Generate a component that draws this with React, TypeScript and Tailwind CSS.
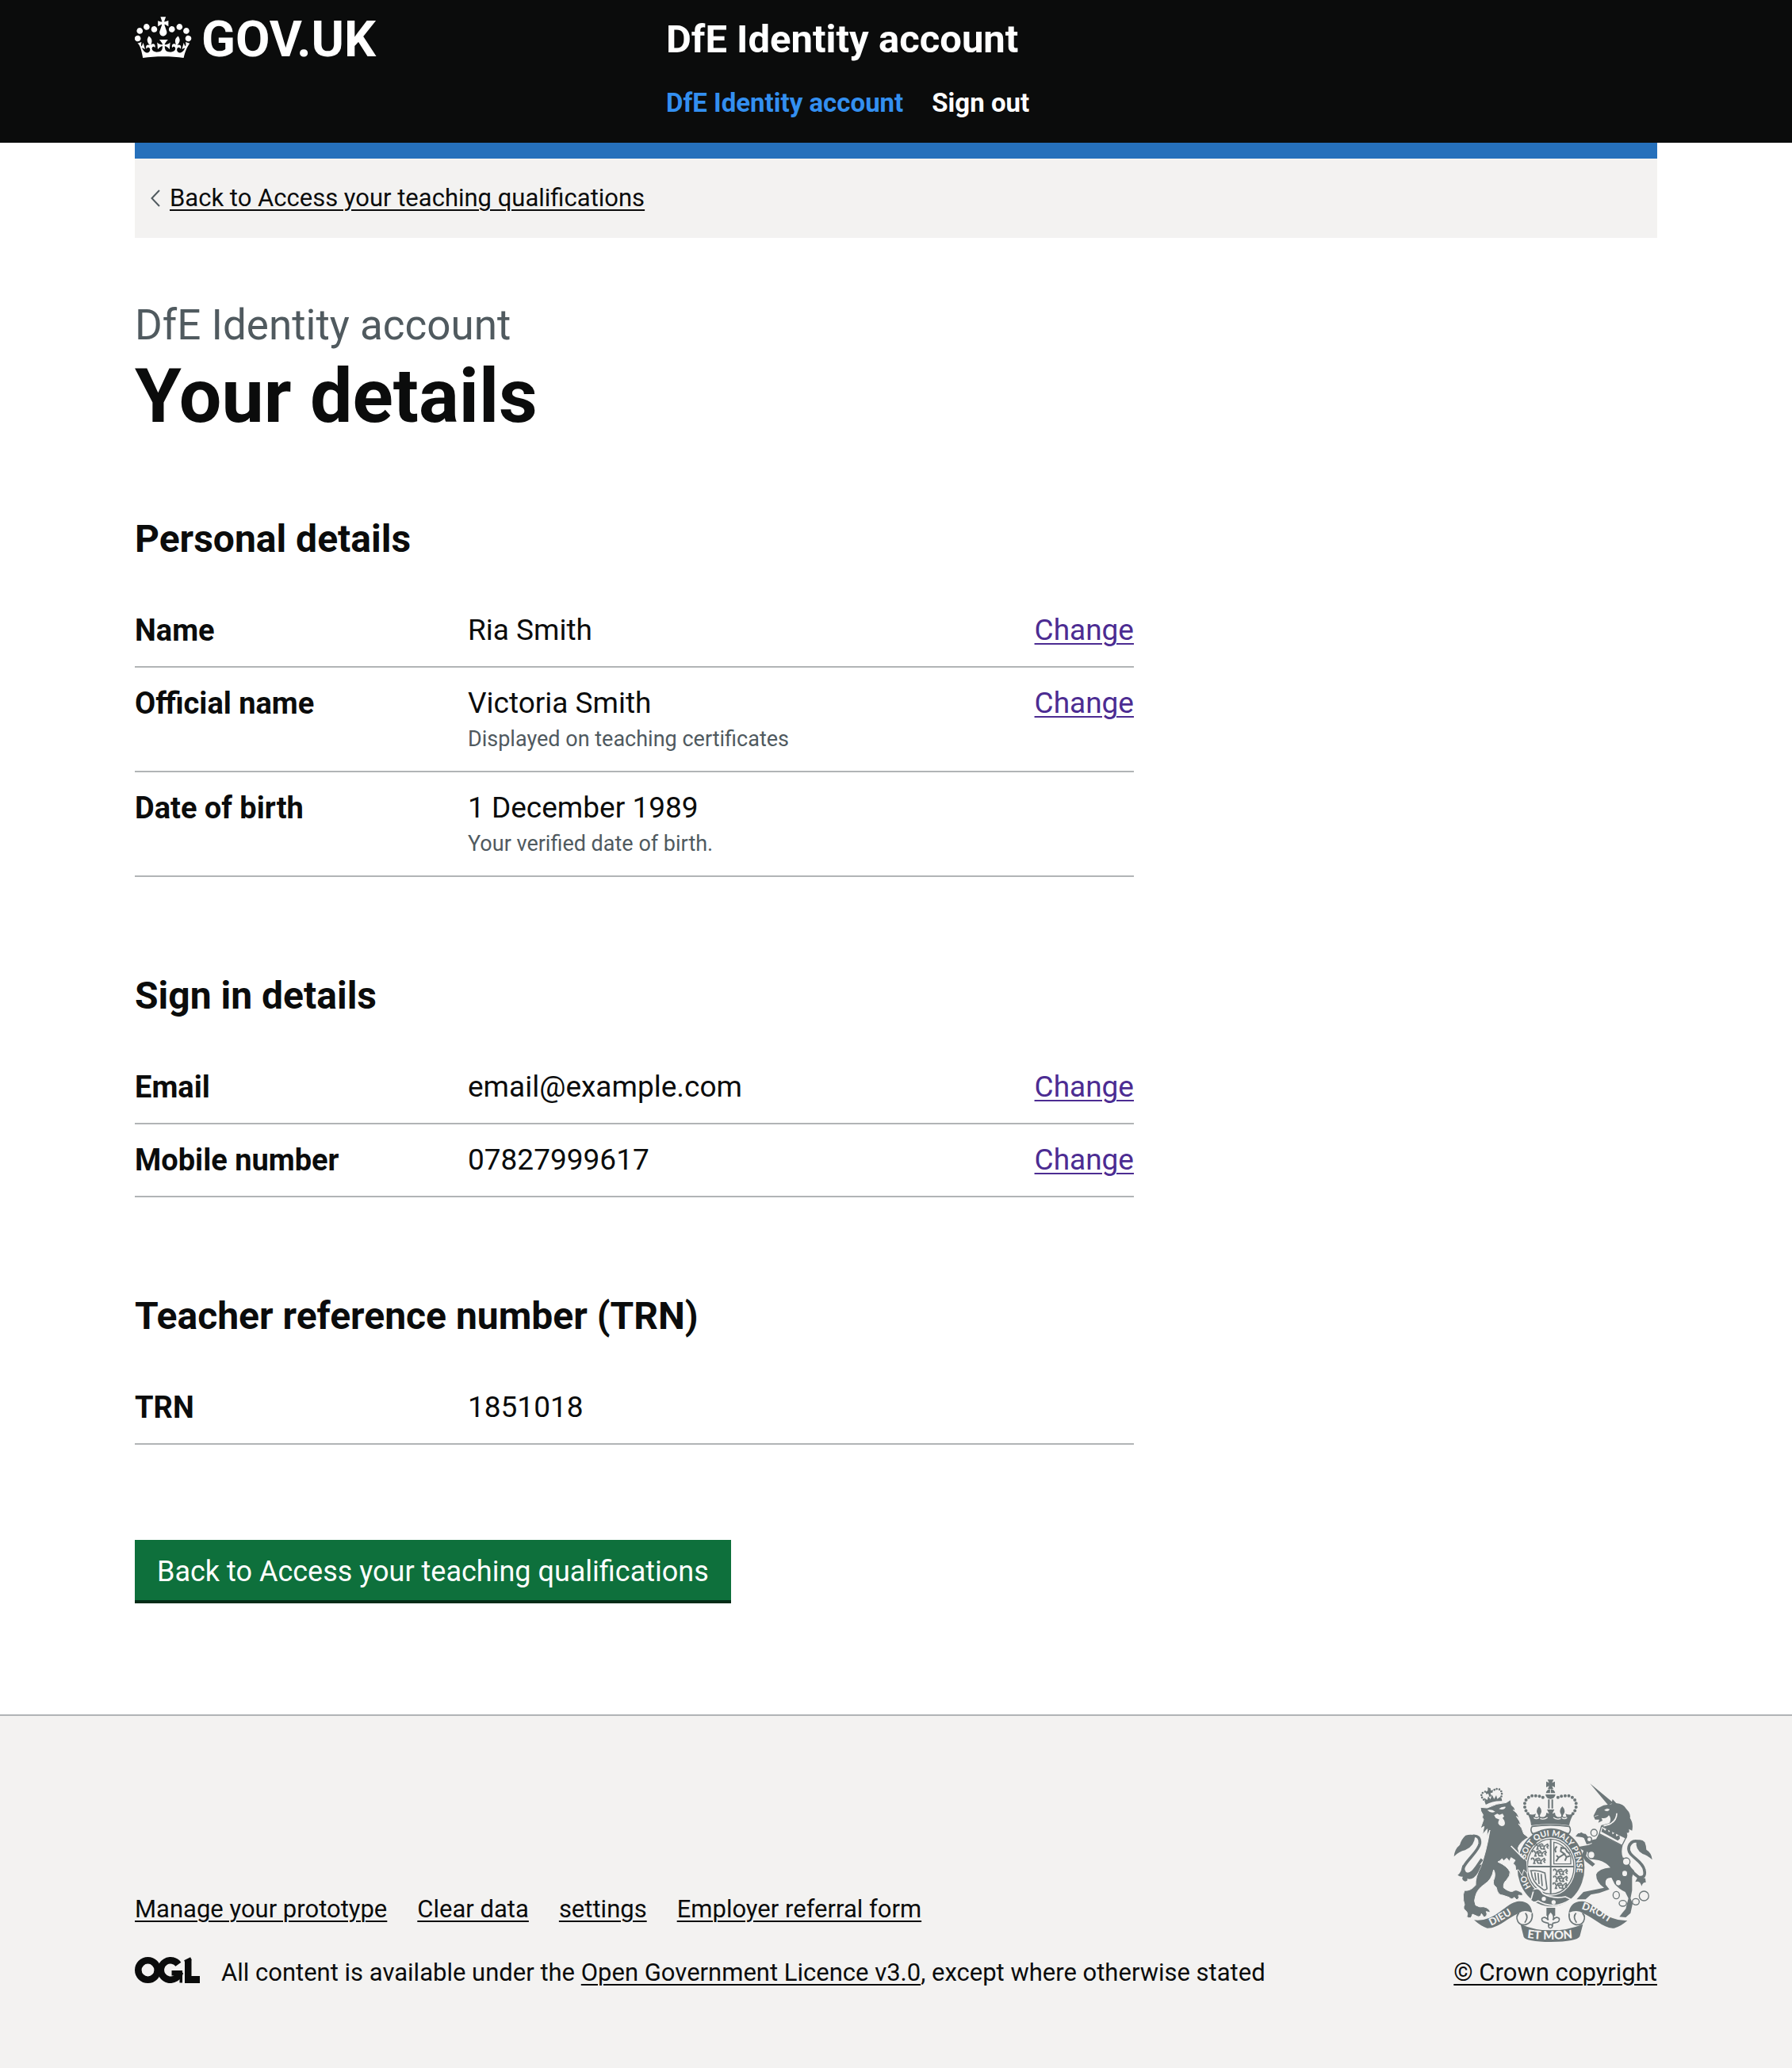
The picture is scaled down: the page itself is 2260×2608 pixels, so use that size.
import React from "react";

type Row = { label: string; value: string; hint?: string; change?: boolean };

const sections: { title: string; rows: Row[] }[] = [
  {
    title: "Personal details",
    rows: [
      { label: "Name", value: "Ria Smith", change: true },
      { label: "Official name", value: "Victoria Smith", hint: "Displayed on teaching certificates", change: true },
      { label: "Date of birth", value: "1 December 1989", hint: "Your verified date of birth." },
    ],
  },
  {
    title: "Sign in details",
    rows: [
      { label: "Email", value: "email@example.com", change: true },
      { label: "Mobile number", value: "07827999617", change: true },
    ],
  },
  {
    title: "Teacher reference number (TRN)",
    rows: [{ label: "TRN", value: "1851018" }],
  },
];

const footerLinks = ["Manage your prototype", "Clear data", "settings", "Employer referral form"];

function Crown() {
  return (
    <svg viewBox="0 0 36 32" className="h-16 w-[72px] shrink-0" fill="currentColor" aria-hidden="true">
      <path d="M6.7 12.2c1 .4 2.1-.1 2.5-1s-.1-2.1-1-2.5c-1-.4-2.1.1-2.5 1-.4 1 0 2.1 1 2.5m-4.3 2.5c1 .4 2.1-.1 2.5-1 .4-1-.1-2.1-1-2.5-1-.4-2.1.1-2.5 1-.5 1 0 2.1 1 2.5m-1.3 4.8c1 .4 2.1-.1 2.5-1 .4-1-.1-2.1-1-2.5-1-.4-2.1.1-2.5 1-.4 1 0 2.1 1 2.5m10.4-5.8c1 .4 2.1-.1 2.5-1 .4-1-.1-2.1-1-2.5-1-.4-2.1.1-2.5 1s0 2.1 1 2.5m17.4-1.5c-1 .4-2.1-.1-2.5-1s.1-2.1 1-2.5c1-.4 2.1.1 2.5 1 .5 1 0 2.1-1 2.5m4.3 2.5c-1 .4-2.1-.1-2.5-1-.4-1 .1-2.1 1-2.5 1-.4 2.1.1 2.5 1 .5 1 0 2.1-1 2.5m1.3 4.8c-1 .4-2.1-.1-2.5-1-.4-1 .1-2.1 1-2.5 1-.4 2.1.1 2.5 1 .4 1 0 2.1-1 2.5m-10.4-5.8c-1 .4-2.1-.1-2.5-1s.1-2.1 1-2.5c1-.4 2.1.1 2.5 1 .5 1 0 2.1-1 2.5m-5.3-4.9 2.4 1.3V6.5l-2.4.8c-.1-.1-.1-.2-.2-.2s1-3 1-3h-3.4l1 3c-.1.1-.2.1-.2.2-.1.1-2.4-.7-2.4-.7v3.5L17 8.8c-.1.1 0 .2.1.3l-1.4 4.2c-.1.2-.1.4-.1.7 0 1.1.8 2.1 1.9 2.2h.8c1.1-.2 1.9-1.1 1.9-2.2 0-.2 0-.4-.1-.7l-1.4-4.2c.2-.1.3-.2.3-.3m-1 20.3c4.6 0 8.9.3 12.8.9 1.1-4.6 2.4-7.2 3.8-9.1l-2.6-.9c.3 1.3.3 1.9 0 2.8-.4-.4-.8-1.2-1.1-2.4l-1.2 4.2c.8-.5 1.4-.9 2-.9-1.2 2.6-2.7 3.2-3.6 3-1.2-.2-1.7-1.3-1.5-2.2.3-1.3 1.6-1.6 2.2-.1 1.2-2.4-.8-3.1-2.1-2.4 1.9-1.9 2.2-3.6.6-5.7-2.2 1.7-2.2 3.3-1.2 5.6-1.3-1.5-3.3-.7-2.5 1.7.9-1.4 2.1-.5 2 .8-.2 1.2-1.7 2.1-3.7 1.9-2.8-.2-3-2.2-3-3.7.7-.1 1.9.5 3 2l.4-4.4c-1.1 1.2-2.3 1.4-3.5 1.4.4-1.2 2.1-3.1 2.1-3.1h-5.4s1.7 1.9 2.1 3.1c-1.2 0-2.4-.2-3.5-1.4l.4 4.4c1.1-1.5 2.3-2.1 3-2-.1 1.6-.2 3.5-3 3.7-2 .2-3.5-.7-3.7-1.9-.1-1.3 1-2.2 1.9-.8.7-2.4-1.3-3.1-2.6-1.7 1-2.3 1-4-1.2-5.6-1.6 2.1-1.3 3.8.6 5.7-1.3-.7-3.2 0-2.1 2.4.6-1.5 1.9-1.1 2.2.1.2.9-.4 1.9-1.5 2.2-1 .2-2.4-.5-3.6-3 .6 0 1.2.3 2 .9l-1.2-4.2c-.3 1.1-.7 1.9-1.1 2.4-.3-.9-.2-1.4 0-2.8l-2.6.9C2.7 21 4 23.6 5.1 30c4-.6 8.2-.9 12.9-.9" />
    </svg>
  );
}

function OglLogo() {
  return (
    <svg viewBox="0 0 82 33" className="h-[33px] w-[82px] shrink-0 self-start text-[#0b0c0c]" role="img" aria-label="Open Government Licence">
      <g fill="none" stroke="currentColor" strokeWidth="8.6">
        <circle cx="16.5" cy="16.5" r="12.2" />
        <circle cx="45" cy="16.5" r="12.2" strokeDasharray="66 100" transform="rotate(12 45 16.5)" />
      </g>
      <rect x="46.5" y="17" width="13.5" height="6.5" fill="currentColor" />
      <rect x="56.5" y="17" width="3.5" height="15.5" fill="currentColor" />
      <rect x="63" y="4" width="8.5" height="29" fill="currentColor" />
      <line x1="63" y1="6" x2="71" y2="2" stroke="currentColor" strokeWidth="4" />
      <rect x="63" y="24" width="19" height="9" fill="currentColor" />
    </svg>
  );
}

function SmallLion({ x, y }: { x: number; y: number }) {
  return (
    <g transform={`translate(${x} ${y})`}>
      <path d="M0 8q-3-7 4-6q6 1 4 8M8 10h32M12 12l-4 10h7M20 12l4 9h6M36 12l-3 10h7M40 8l8-5 3 6-7 6M46 14l5 6M14 6l12-4 6 4" />
    </g>
  );
}

function RoyalArms() {
  const paper = "#f3f2f1";
  return (
    <svg viewBox="100 70 756 615" className="h-[205px] w-[252px]" fill="#6c7678" stroke="none" aria-hidden="true">
      <defs>
        <path id="garter" d="M468 518A98 117 0 0 1 468 284A98 117 0 0 1 468 518" />
        <path id="ribbon-left" d="M243 624Q290 602 352 561" />
        <path id="ribbon-mid" d="M379 670Q467 681 558 670" />
        <path id="ribbon-right" d="M584 560Q640 576 700 620" />
      </defs>

      {/* great crown */}
      <path d="M456 71h23l-6 12 11-5v22l-11-5 5 12h-21l5-12-11 5V78l11 5z" />
      <path d="M450 122q2-14 17-15q16 1 18 15zM448 127h38q-3 17-19 17t-19-17z" />
      <path d="M467 107v16" stroke={paper} strokeWidth="3" />
      <g fill="none" stroke="#6c7678" strokeWidth="12" strokeLinecap="round" strokeDasharray="0 14">
        <path d="M382 200C356 168 372 128 412 132Q434 132 450 146" />
        <path d="M552 200C578 168 562 128 522 132Q500 132 484 146" />
      </g>
      <path d="M458 146h6v34h-6zM471 146h6v34h-6z" />
      <path d="M376 192q14 18 36 8l-4 12q22 4 10-12q-8-14 6-28q14 14 6 28q-10 16 14 12l6-6 2-10 10 4-8-16h28l-8 16 10-4 2 10 6 6q22 4 14-12q-8-14 6-28q14 14 6 28q-12 16 10 12l-4-12q22 10 36-8q-18 26-22 52Q467 234 394 244q-2-26-18-52z" />
      <path d="M404 215q10 8 20 0M428 218q14 6 28-4M478 214q14 10 28 4M510 215q10 8 20 0" fill="none" stroke={paper} strokeWidth="4" />
      <path d="M398 248q-10 14 2 28Q467 248 536 276q12-14 2-28Q467 238 398 248z" fill={paper} stroke="#6c7678" strokeWidth="5" />

      {/* garter and shield */}
      <ellipse cx="469" cy="403" rx="127" ry="148" />
      <ellipse cx="468" cy="400" rx="94" ry="110" fill={paper} />
      <ellipse cx="468" cy="400" rx="88" ry="104" fill="none" stroke="#6c7678" strokeWidth="4" />
      <path d="M465 296h6v208h-6zM380 397h176v6H380z" />
      <g fill="none" stroke="#6c7678" strokeWidth="5">
        <SmallLion x={408} y={312} />
        <SmallLion x={400} y={338} />
        <SmallLion x={396} y={366} />
        <SmallLion x={480} y={408} />
        <SmallLion x={480} y={434} />
        <SmallLion x={478} y={460} />
        <path d="M480 308q36 4 64 54v28h-64z" strokeWidth="4" />
        <path d="M488 380l10-14-8-8M498 366l22-14-14-10 2-14 16 4 6 12 10 6M520 352l8 12-6 14M526 364l14-4M488 346q-8-14 4-22" strokeWidth="6" />
        <path d="M390 416q30-4 56 8l8 60q-10 10-18 0Q398 462 394 418M408 422l4 30M420 424l4 42M432 428l4 46" strokeWidth="5" />
      </g>
      <path d="M404 488q20-14 34 14Q476 524 524 514l20 10Q480 566 420 530q-20 12-26-6z" stroke={paper} strokeWidth="5" />
      <circle cx="442" cy="522" r="8" fill={paper} />
      <circle cx="479" cy="535" r="8" fill={paper} />
      <path d="M400 492q24-6 24 8q-10 8-4 22q-12 12-24 2" fill="none" stroke="#6c7678" strokeWidth="6" />
      <path d="M452 556h33v30h-33z" />
      <path d="M468 570q18 18 8 32q14-16 24-6q4 14-14 16l-10 2-2 12h-13l-2-12-10-2q-18-4-14-16q10-10 24 6q-8-16 9-32z" fill={paper} stroke="#6c7678" strokeWidth="5" />
      <circle cx="467" cy="626" r="7" fill={paper} stroke="#6c7678" strokeWidth="4" />

      {/* lion */}
      <g stroke={paper} strokeWidth="3">
        <path d="M204 190L202 176L228 178Q262 160 300 158L316 147L320 168Q334 176 334 190L326 186Q344 198 349 216L338 210Q352 228 356 244L346 238Q360 252 366 276L384 290Q352 306 344 330L350 350Q366 360 378 382L380 426L366 412L360 434L346 412L336 414L334 396L326 388L334 376L318 366L312 380L302 368L290 378L284 370Q276 380 268 382Q304 398 314 420Q316 434 300 452Q288 462 290 480Q310 496 324 494Q336 484 350 494Q366 500 360 510L346 508Q352 520 340 526L330 516Q322 528 310 516L286 508Q272 508 266 492L262 478Q248 470 252 452Q262 430 252 412Q246 450 216 468Q190 486 184 510Q176 530 184 546Q200 556 214 552Q236 556 240 574L224 570Q232 586 216 592L206 578Q202 596 186 586L172 580Q168 602 150 590Q158 578 146 566Q134 560 142 544L138 528Q134 504 142 490Q164 494 184 470Q182 440 204 400Q214 370 222 340Q232 300 238 262L226 286L228 258L210 278L216 248L202 256L214 222Q206 214 212 204z" />
      </g>
      <path d="M318 322L368 372" stroke={paper} strokeWidth="5" />
      <path d="M228 186q16-4 30 6q-16 8-30-6zM272 182q10-10 26-8q-6 14-26 8zM254 206l12-6 8 4 12-4 6 10-6 6q14 16 6 28q-14 8-22-6q-2-10 4-16l-14-6z" fill={paper} />
      <g>
        <path d="M222 166Q250 150 284 152L282 142Q250 146 222 158z" />
        <path d="M220 154l-4-14 12 8 4-14 8 12 6-18 8 16 8-14 4 14 14-10-4 16q-28 0-56 12z" />
        <path d="M230 100l10 4 2 8 8-2-2 10-8 2 4 12-8 2-4-12-8 2-2-9 8-3z" />
        <path d="M222 154Q196 132 212 120Q224 112 238 122M278 144Q290 118 274 108Q260 102 248 116" fill="none" stroke="#6c7678" strokeWidth="8" strokeLinecap="round" strokeDasharray="0 10" />
      </g>
      <path d="M208 372C190 396 170 440 144 426C112 400 196 350 200 312Q202 282 174 284" fill="none" stroke="#6c7678" strokeWidth="11" />
      <path d="M184 282Q164 276 146 282Q130 296 124 318Q104 334 102 362Q122 342 144 338Q180 324 182 284z" />
      <path d="M134 394Q130 424 116 432Q126 440 136 438Q128 448 144 456Q156 456 152 446Q176 452 192 424L208 392L190 396Q168 432 148 422z" />

      {/* unicorn */}
      <path d="M617 86L704 158L686 168z" />
      <path d="M630 208L644 180L668 168L698 164L702 145L716 160Q744 162 754 182Q772 200 768 216Q782 236 776 264L764 258Q768 276 756 272Q762 290 750 296L658 244L690 236Q700 216 688 206Q680 220 660 216L664 226L648 234L652 222L636 222z" />
      <path d="M672 186q10-8 18-2q-6 10-18 2zM634 210l14-4" fill={paper} stroke={paper} strokeWidth="2" />
      <path d="M718 198Q718 226 690 240L668 246" fill="none" stroke={paper} strokeWidth="5" />
      <path d="M660 247L752 292L738 320L652 276z" fill={paper} stroke="#6c7678" strokeWidth="4" />
      <path d="M660 268l4-14 10 10 8-10 6 16 10-10 4 18 12-8 2 16 12-6 2 14-8 8z" />
      <path d="M650 276L740 322Q730 356 752 384L784 416L776 440L776 490L770 520L778 540L770 576L752 592L728 590L740 574L752 560L762 520L750 496Q730 488 710 466L698 442Q672 440 676 468L690 486L652 500L620 506L600 524L566 524L592 496L670 480Q640 460 640 430Q650 408 694 404Q678 384 650 376L626 372L606 342L602 360L616 374L636 390L626 400L600 380L586 358L592 340L570 326L612 318L626 312L604 306L596 290L562 286L572 274L600 276L620 300L640 296z" />
      <path d="M566 280L584 270L602 282L620 312L604 316L594 292z" />
      <path d="M740 368Q770 420 800 440Q830 446 822 412C814 372 754 362 764 324Q774 296 804 306" fill="none" stroke="#6c7678" strokeWidth="11" />
      <path d="M792 302Q812 294 824 308Q830 324 830 336Q850 348 852 374Q832 356 816 352Q788 338 792 302z" />
      <path d="M744 374Q762 416 796 442L788 458Q806 450 812 474Q816 458 828 460L826 444L814 442Q780 424 760 382z" />
      <g fill={paper} stroke="#6c7678" strokeWidth="4">
        <ellipse cx="632" cy="272" rx="12" ry="13" />
        <ellipse cx="614" cy="297" rx="9" ry="9" />
        <ellipse cx="622" cy="356" rx="13" ry="14" />
        <ellipse cx="754" cy="381" rx="14" ry="14" />
        <ellipse cx="748" cy="426" rx="11" ry="12" />
        <ellipse cx="724" cy="461" rx="11" ry="12" />
        <ellipse cx="716" cy="508" rx="12" ry="14" />
        <ellipse cx="741" cy="539" rx="14" ry="11" />
        <ellipse cx="790" cy="533" rx="13" ry="12" />
        <circle cx="821" cy="511" r="18" />
      </g>

      {/* motto ribbon */}
      <g>
        <path d="M178 602Q206 606 236 594C280 576 310 534 348 531C382 530 396 550 398 575Q366 560 348 576C304 594 270 634 228 633Q204 626 178 602z" />
        <path d="M758 604Q730 606 700 594C656 576 626 534 588 531C554 530 540 550 536 575Q568 560 590 576C632 594 668 634 708 633Q734 626 758 604z" />
        <path d="M348 576Q334 590 344 608Q352 622 372 620Q402 612 398 576M372 576Q386 590 370 612" fill="none" stroke="#6c7678" strokeWidth="5" />
        <path d="M588 576Q602 590 592 608Q584 622 564 620Q534 612 538 576M564 576Q550 590 566 612" fill="none" stroke="#6c7678" strokeWidth="5" />
        <path d="M354 618Q410 642 468 641Q530 642 590 618L578 664Q568 684 468 685Q376 684 366 666z" />
      </g>
      <g fill={paper} fontFamily="Lato, sans-serif" fontWeight="900" fontSize="38">
        <text fontSize="31"><textPath href="#garter" startOffset="88">HO<tspan dx="62">SOIT QUI MALY PENSE</tspan></textPath></text>
        <text><textPath href="#ribbon-left">DIEU</textPath></text>
        <text fontSize="44"><textPath href="#ribbon-mid">ET MON</textPath></text>
        <text><textPath href="#ribbon-right">DROIT</textPath></text>
      </g>
    </svg>
  );
}

export default function App() {
  return (
    <div className="flex min-h-screen flex-col bg-white font-[Roboto,sans-serif] text-[#0b0c0c] antialiased">
      <header className="bg-[#0b0c0c] text-white">
        <div className="mx-auto flex w-full max-w-[1984px] px-8">
          <div className="w-[670px] pt-[13px]">
            <a href="#" className="inline-flex items-start gap-3">
              <Crown />
              <span className="text-[63px] leading-[74px] font-bold">GOV.UK</span>
            </a>
          </div>
          <div className="flex-1 pt-5 pb-[30px]">
            <a href="#" className="block text-[49px] leading-[60px] font-bold">DfE Identity account</a>
            <nav className="mt-[30px] flex gap-9 text-[33px] leading-10 font-bold">
              <a href="#" className="text-[#338ff0]">DfE Identity account</a>
              <a href="#">Sign out</a>
            </nav>
          </div>
        </div>
      </header>

      <div className="mx-auto w-full max-w-[1984px] px-8">
        <div className="h-5 bg-[#2670bb]" />
        <div className="flex items-center gap-3 bg-[#f3f2f1] px-5 py-[30px]">
          <svg viewBox="0 0 12 22" className="h-[22px] w-3" fill="none" stroke="#505a5f" strokeWidth="2" aria-hidden="true">
            <path d="M11 1L1.500 11L11 21" />
          </svg>
          <a href="#" className="text-[31px] leading-10 underline decoration-2 underline-offset-4">
            Back to Access your teaching qualifications
          </a>
        </div>

        <main className="py-20">
          <span className="mb-[10px] block text-[53px] leading-[60px] text-[#505a5f]">DfE Identity account</span>
          <h1 className="mb-[100px] text-[95px] leading-[100px] font-bold">Your details</h1>
          {sections.map((section) => (
            <section key={section.title} className="mb-[120px] w-2/3 pr-5">
              <h2 className="mb-10 text-[48px] leading-[60px] font-bold">{section.title}</h2>
              <dl className="text-[37px] leading-[50px]">
                {section.rows.map((row) => (
                  <div key={row.label} className="flex border-b-2 border-[#b1b4b6] py-5">
                    <dt className="w-1/3 text-[38px] font-bold">{row.label}</dt>
                    <dd className="flex-1">
                      {row.value}
                      {row.hint && <span className="block text-[27px] leading-10 text-[#505a5f]">{row.hint}</span>}
                    </dd>
                    {row.change && (
                      <dd>
                        <a href="#" className="text-[#4c2c92] underline decoration-2 underline-offset-4">Change</a>
                      </dd>
                    )}
                  </div>
                ))}
              </dl>
            </section>
          ))}
          <button type="button" className="block bg-[#0e703c] px-7 pt-4 pb-3 text-[36px] leading-[48px] text-white shadow-[0_4px_0_#042d18]">
            Back to Access your teaching qualifications
          </button>
        </main>
      </div>

      <footer className="mt-16 flex-1 border-t-2 border-[#b1b4b6] bg-[#f3f2f1] text-[31px] leading-10">
        <div className="mx-auto flex max-w-[1984px] items-end justify-between px-8 pt-20 pb-[100px]">
          <div>
            <ul className="mb-10 flex flex-wrap gap-x-[38px]">
              {footerLinks.map((link) => (
                <li key={link}>
                  <a href="#" className="underline decoration-2 underline-offset-4">{link}</a>
                </li>
              ))}
            </ul>
            <div className="flex items-center gap-[27px]">
              <OglLogo />
              <span>
                All content is available under the{" "}
                <a href="#" className="underline decoration-2 underline-offset-4">Open Government Licence v3.0</a>, except where otherwise stated
              </span>
            </div>
          </div>
          <a href="#" className="flex flex-col items-start gap-[19px]">
            <RoyalArms />
            <span className="underline decoration-2 underline-offset-4">© Crown copyright</span>
          </a>
        </div>
      </footer>
    </div>
  );
}
